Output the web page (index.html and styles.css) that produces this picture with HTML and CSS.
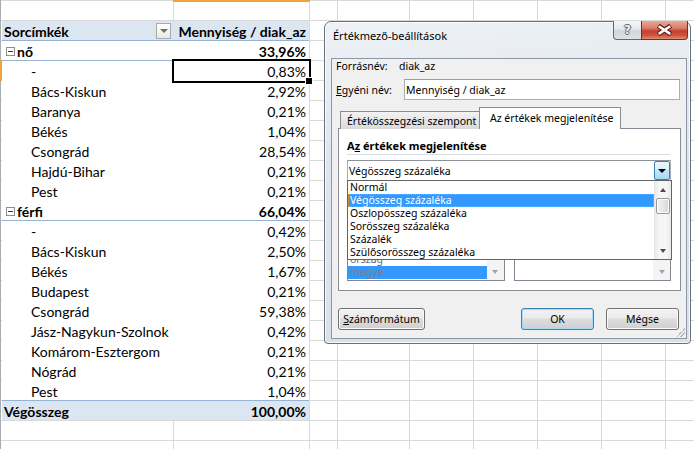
FILE: index.html
```html
<!DOCTYPE html>
<html lang="hu">
<head>
<meta charset="utf-8">
<title>Pivot</title>
<link rel="stylesheet" href="styles.css">
</head>
<body>
<div class="pivot">
  <div class="prow shade line bold"><div class="ca">Sorcímkék<span class="filter"></span></div><div class="cb">Mennyiség / diak_az</div></div>
  <div class="prow line bold"><div class="ca grp"><span class="toggle"></span>nő</div><div class="cb">33,96%</div></div>
  <div class="prow item"><div class="ca">-</div><div class="cb sel">0,83%</div></div>
  <div class="prow item"><div class="ca">Bács-Kiskun</div><div class="cb">2,92%</div></div>
  <div class="prow item"><div class="ca">Baranya</div><div class="cb">0,21%</div></div>
  <div class="prow item"><div class="ca">Békés</div><div class="cb">1,04%</div></div>
  <div class="prow item"><div class="ca">Csongrád</div><div class="cb">28,54%</div></div>
  <div class="prow item"><div class="ca">Hajdú-Bihar</div><div class="cb">0,21%</div></div>
  <div class="prow item"><div class="ca">Pest</div><div class="cb">0,21%</div></div>
  <div class="prow line bold"><div class="ca grp"><span class="toggle"></span>férfi</div><div class="cb">66,04%</div></div>
  <div class="prow item"><div class="ca">-</div><div class="cb">0,42%</div></div>
  <div class="prow item"><div class="ca">Bács-Kiskun</div><div class="cb">2,50%</div></div>
  <div class="prow item"><div class="ca">Békés</div><div class="cb">1,67%</div></div>
  <div class="prow item"><div class="ca">Budapest</div><div class="cb">0,21%</div></div>
  <div class="prow item"><div class="ca">Csongrád</div><div class="cb">59,38%</div></div>
  <div class="prow item"><div class="ca">Jász-Nagykun-Szolnok</div><div class="cb">0,42%</div></div>
  <div class="prow item"><div class="ca">Komárom-Esztergom</div><div class="cb">0,21%</div></div>
  <div class="prow item"><div class="ca">Nógrád</div><div class="cb">0,21%</div></div>
  <div class="prow item line"><div class="ca">Pest</div><div class="cb">1,04%</div></div>
  <div class="prow shade last bold"><div class="ca">Végösszeg</div><div class="cb">100,00%</div></div>
</div>

<div class="dialog">
  <div class="titlebar"><span class="title">Értékmező-beállítások</span></div>
  <div class="tbtns">
    <span class="help">?</span>
    <span class="close"><svg width="47" height="19" viewBox="0 0 47 19"><path d="M17 4.5 L30 13.5 M30 4.5 L17 13.5" stroke="#5a1f18" stroke-width="5" fill="none"/><path d="M17.5 5 L29.5 13 M29.5 5 L17.5 13" stroke="#ffffff" stroke-width="2.6" fill="none"/></svg></span>
  </div>
  <div class="client">
    <div class="frow"><span class="lbl1">Forrásnév:</span><span>diak_az</span></div>
    <div class="frow row2"><span class="lbl2"><u>E</u>gyéni név:</span><div class="tbox">Mennyiség / diak_az</div></div>
    <div class="tabs">
      <div class="tab">Értékösszegzési szempont</div>
      <div class="tab active">Az értékek megjelenítése</div>
    </div>
    <div class="tabpanel">
      <div class="ghead">A<u>z</u> értékek megjelenítése</div>
      <div class="combo"><span class="ctext">Végösszeg százaléka</span><span class="dbtn"></span></div>
      <div class="lists">
        <div class="lbox lleft">
          <div class="litems"><div class="li">ország</div><div class="li hl">megye</div></div>
          <div class="lsb"><span class="arr-d gray"></span></div>
        </div>
        <div class="lbox lright">
          <div class="litems"></div>
          <div class="lsb"><span class="arr-d gray"></span></div>
        </div>
      </div>
      <div class="dropdown">
        <div class="ditems">
          <div class="di">Normál</div>
          <div class="di dsel">Végösszeg százaléka</div>
          <div class="di">Oszlopösszeg százaléka</div>
          <div class="di">Sorösszeg százaléka</div>
          <div class="di">Százalék</div>
          <div class="di">Szülősorösszeg százaléka</div>
        </div>
        <div class="dsb">
          <span class="sbtn"><span class="arr-u"></span></span>
          <span class="thumb"></span>
          <span class="sbtn end"><span class="arr-d"></span></span>
        </div>
      </div>
    </div>
    <div class="buttons">
      <button class="btn wide"><u>S</u>zámformátum</button>
      <button class="btn ok">OK</button>
      <button class="btn">Mégse</button>
    </div>
    <span class="grip"></span>
  </div>
</div>

<svg class="cursor" width="13" height="20" viewBox="0 0 13 20"><path d="M0.5 0.5 L0.5 15.5 L4 12.2 L6.6 18 L8.8 17 L6.3 11.3 L11 11.3 Z" fill="#fff" stroke="#000" stroke-width="1" stroke-linejoin="miter"/></svg>
</body>
</html>
```

FILE: styles.css
```css
* { box-sizing: border-box; }

html, body { margin: 0; padding: 0; }

body {
  width: 694px;
  height: 449px;
  overflow: hidden;
  position: relative;
  font-family: Lato, "Liberation Sans", sans-serif;
  background:
    linear-gradient(#f0a23c, #f0a23c) 173px 0 / 137px 2px no-repeat,
    linear-gradient(#f0a23c, #f0a23c) 0 60px / 2px 21px no-repeat,
    linear-gradient(#a8acb0, #a8acb0) 0 0 / 1px 100% no-repeat,
    linear-gradient(#d9d9d9, #d9d9d9) 173px 0 / 1px 100% no-repeat,
    linear-gradient(#d9d9d9, #d9d9d9) 309px 0 / 1px 100% no-repeat,
    linear-gradient(#d9d9d9, #d9d9d9) 337px 0 / 1px 100% no-repeat,
    linear-gradient(#d9d9d9, #d9d9d9) 409px 0 / 1px 100% no-repeat,
    linear-gradient(#d9d9d9, #d9d9d9) 473px 0 / 1px 100% no-repeat,
    linear-gradient(#d9d9d9, #d9d9d9) 537px 0 / 1px 100% no-repeat,
    linear-gradient(#d9d9d9, #d9d9d9) 601px 0 / 1px 100% no-repeat,
    linear-gradient(#d9d9d9, #d9d9d9) 665px 0 / 1px 100% no-repeat,
    repeating-linear-gradient(to bottom, #d9d9d9 0 1px, #ffffff 1px 20px);
}

/* ---------- pivot table ---------- */
.pivot {
  margin: 21px 0 0 2px;
  width: 307px;
  background: #fff;
  font-size: 14px;
  color: #000;
}

.prow {
  display: flex;
  height: 20px;
  border-bottom: 1px solid #fff;
}
.prow.line { border-bottom-color: #95b3d7; }
.prow.shade { background: #dce6f1; }
.prow.last { border-bottom-color: #d9d9d9; }
.bold { font-weight: 700; }

.ca {
  width: 171px;
  display: flex;
  align-items: center;
  padding: 1px 0 0 2px;
  white-space: nowrap;
}
.item .ca { padding-left: 29px; }
.ca.grp { padding-left: 4px; }

.cb {
  width: 136px;
  display: flex;
  align-items: center;
  justify-content: flex-end;
  padding: 1px 3px 0 0;
  white-space: nowrap;
  position: relative;
}

.toggle {
  width: 9px;
  height: 9px;
  border: 1px solid #8d8d8d;
  background: #fff;
  margin-right: 2px;
  position: relative;
  flex: none;
}
.toggle::after {
  content: "";
  position: absolute;
  left: 1px;
  right: 1px;
  top: 3px;
  height: 1px;
  background: #3a3a3a;
}

.filter {
  margin-left: auto;
  margin-right: 2px;
  width: 15px;
  height: 16px;
  border: 1px solid #a9a9a9;
  background: linear-gradient(#ffffff, #e9e9e9);
  display: flex;
  align-items: center;
  justify-content: center;
  flex: none;
}
.filter::after {
  content: "";
  border-left: 4px solid transparent;
  border-right: 4px solid transparent;
  border-top: 4px solid #6f6f6f;
}

.sel::before {
  content: "";
  position: absolute;
  left: -1px;
  top: -2px;
  right: -2px;
  bottom: -3px;
  border: 2px solid #000;
}
.sel::after {
  content: "";
  position: absolute;
  right: -4px;
  bottom: -5px;
  width: 6px;
  height: 6px;
  background: #000;
  border: 1px solid #fff;
}

/* ---------- dialog ---------- */
.dialog {
  position: absolute;
  left: 324px;
  top: 21px;
  width: 367px;
  height: 323px;
  border: 1px solid #66717d;
  border-radius: 7px 7px 4px 4px;
  background: linear-gradient(175deg, #eef2f6 0%, #dfe5ec 40%, #d9e0e8 100%);
  box-shadow: inset 0 0 0 1px rgba(255, 255, 255, 0.75);
  padding: 0 3px 4px 6px;
  display: flex;
  flex-direction: column;
  font-family: "Noto Sans", "Open Sans", sans-serif;
  font-size: 10.5px;
  color: #000;
}

.titlebar {
  height: 36px;
  flex: none;
}
.title {
  display: block;
  padding: 6px 0 0 2px;
  font-size: 11px;
  line-height: 16px;
}

.tbtns {
  position: absolute;
  top: -1px;
  right: 2px;
  display: flex;
}
.help, .close {
  height: 19px;
  border: 1px solid #5d6873;
  border-top: none;
  display: flex;
  align-items: center;
  justify-content: center;
}
.help {
  width: 28px;
  border-radius: 0 0 0 4px;
  border-right: none;
  background: linear-gradient(#f5f7f9 0%, #e3e8ed 45%, #cfd6dd 55%, #dbe1e7 100%);
  font-family: "DejaVu Sans", sans-serif;
  font-weight: 700;
  font-size: 12px;
  color: #f2f4f6;
  text-shadow: 1px 0 #59636e, -1px 0 #59636e, 0 1px #59636e, 0 -1px #59636e;
}
.close {
  width: 47px;
  border-radius: 0 0 4px 0;
  border-color: #7a2a20;
  background: linear-gradient(#eaa99a 0%, #db7c68 40%, #c4402c 55%, #d0533c 80%, #e08d72 100%);
}

.client {
  flex: 1;
  position: relative;
  border: 1px solid #8d98a4;
  background: #f0f0f0;
  display: flex;
  flex-direction: column;
}

.frow {
  display: flex;
  align-items: center;
  height: 14px;
  padding-left: 4px;
}
.row2 {
  margin-top: 6px;
  height: 21px;
}
.lbl1 { width: 63px; }
.lbl2 { width: 68px; }

.tbox {
  width: 276px;
  height: 21px;
  border: 1px solid #abadb3;
  border-top-color: #9a9da6;
  background: #fff;
  padding-left: 1px;
  display: flex;
  align-items: center;
}

.tabs {
  margin: 7px 0 0 6px;
  height: 22px;
  display: flex;
  align-items: flex-end;
  position: relative;
  z-index: 2;
  margin-bottom: -1px;
}
.tab {
  height: 18px;
  margin-left: 2px;
  width: 140px;
  border: 1px solid #898c95;
  border-bottom: none;
  background: linear-gradient(#f3f3f3, #e6e6e6 50%, #dadada);
  padding-left: 6px;
  display: flex;
  align-items: center;
  white-space: nowrap;
  overflow: hidden;
}
.tab.active {
  height: 22px;
  width: 142px;
  margin-left: -1px;
  background: #fff;
  padding-left: 10px;
  padding-bottom: 2px;
}

.tabpanel {
  margin-left: 6px;
  width: 343px;
  height: 163px;
  border: 1px solid #898c95;
  background: #fff;
  position: relative;
  padding: 0 9px 9px 8px;
  display: flex;
  flex-direction: column;
}

.ghead {
  height: 26px;
  padding-top: 9px;
  line-height: 16px;
  font-weight: 700;
  font-size: 11px;
  border-bottom: 1px solid #d5dde3;
  margin-right: 1px;
}

.combo {
  margin-top: 5px;
  height: 21px;
  border: 1px solid #abadb3;
  border-top-color: #8e9197;
  background: #fff;
  display: flex;
  align-items: center;
  padding-left: 1px;
}
.ctext { flex: 1; }
.dbtn {
  width: 16px;
  height: 19px;
  border: 1px solid #3c7fb1;
  border-radius: 2px;
  background: linear-gradient(#eaf6fd 0%, #d9f0fc 45%, #bee6fd 50%, #a7d9f5 100%);
  display: flex;
  align-items: center;
  justify-content: center;
}
.dbtn::after {
  content: "";
  border-left: 4px solid transparent;
  border-right: 4px solid transparent;
  border-top: 4px solid #000;
}

.lists {
  margin-top: auto;
  height: 22px;
  display: flex;
  gap: 9px;
}
.lbox {
  border: 1px solid #828790;
  border-top: none;
  background: #fff;
  display: flex;
  overflow: hidden;
}
.lleft { width: 158px; }
.lright { width: 158px; }
.litems {
  flex: 1;
  display: flex;
  flex-direction: column;
  justify-content: flex-end;
  padding-bottom: 1px;
  overflow: hidden;
}
.li {
  flex: none;
  height: 13px;
  line-height: 13px;
  padding-left: 2px;
  color: #6d6d6d;
}
.li.hl { background: #3399ff; color: #7b7b8f; }
.lsb {
  width: 17px;
  background: #f4f4f4;
  display: flex;
  align-items: flex-end;
  justify-content: center;
  padding-bottom: 6px;
}

.arr-d, .arr-u {
  width: 0;
  height: 0;
  border-left: 3.5px solid transparent;
  border-right: 3.5px solid transparent;
}
.arr-d { border-top: 4px solid #4a4a4a; }
.arr-u { border-bottom: 4px solid #4a4a4a; }
.arr-d.gray { border-top-color: #a3a3a3; }

.dropdown {
  position: absolute;
  left: 8px;
  top: 51px;
  width: 325px;
  height: 80px;
  border: 1px solid #646464;
  background: #fff;
  display: flex;
  z-index: 3;
}
.ditems { flex: 1; }
.di {
  height: 13px;
  line-height: 13px;
  padding-left: 2px;
  white-space: nowrap;
}
.di.dsel {
  background: #3399ff;
  color: #fff;
  outline: 1px dotted #e39a3c;
  outline-offset: -1px;
}
.dsb {
  width: 17px;
  display: flex;
  flex-direction: column;
  align-items: center;
  background: linear-gradient(to right, #e6e6e6, #f6f6f6 30%, #f6f6f6 70%, #e9e9e9);
}
.sbtn {
  height: 17px;
  width: 17px;
  display: flex;
  align-items: center;
  justify-content: center;
}
.sbtn.end { margin-top: auto; }
.thumb {
  width: 14px;
  height: 16px;
  border: 1px solid #9a9a9a;
  border-radius: 2px;
  background: linear-gradient(to right, #f4f4f4, #e6e6e6 50%, #d6d6d6);
  box-shadow: inset 0 0 0 1px #fbfbfb;
}

.buttons {
  margin: auto 7px 8px 6px;
  display: flex;
  gap: 12px;
}
.btn {
  height: 22px;
  width: 73px;
  border: 1px solid #707070;
  border-radius: 3px;
  background: linear-gradient(#f2f2f2 0%, #ebebeb 45%, #dddddd 50%, #cfcfcf 100%);
  box-shadow: inset 0 0 0 1px #fafafa;
  font-family: "Noto Sans", "Open Sans", sans-serif;
  font-size: 10.5px;
  color: #000;
  padding: 0;
}
.btn.wide {
  width: 87px;
  margin-right: auto;
}
.btn.ok {
  border-color: #3c7fb1;
  box-shadow: inset 0 0 0 1px #a7dcf7;
}

.grip {
  position: absolute;
  right: 1px;
  bottom: 1px;
  width: 9px;
  height: 9px;
  background: linear-gradient(135deg, transparent 50%, #b9b9b9 50%, #b9b9b9 60%, transparent 60%, transparent 70%, #b9b9b9 70%, #b9b9b9 80%, transparent 80%);
}

.cursor {
  position: absolute;
  left: 632px;
  top: 199px;
}
```
